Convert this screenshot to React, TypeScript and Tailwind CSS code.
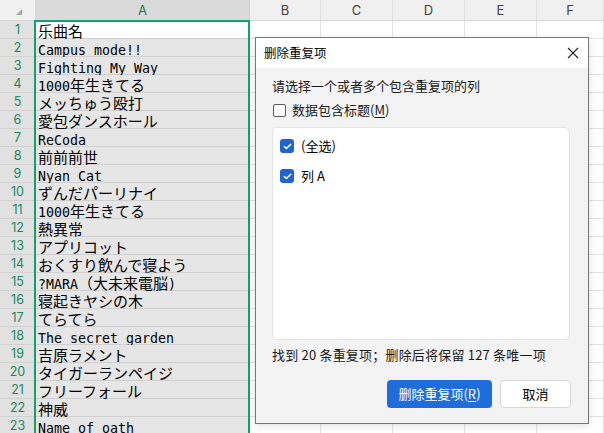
import React from "react";

const songs = [
  "乐曲名",
  "Campus mode!!",
  "Fighting My Way",
  "1000年生きてる",
  "メッちゅう殴打",
  "愛包ダンスホール",
  "ReCoda",
  "前前前世",
  "Nyan Cat",
  "ずんだパーリナイ",
  "1000年生きてる",
  "熱異常",
  "アプリコット",
  "おくすり飲んで寝よう",
  "?MARA（大未来電脳)",
  "寝起きヤシの木",
  "てらてら",
  "The secret garden",
  "吉原ラメント",
  "タイガーランペイジ",
  "フリーフォール",
  "神威",
  "Name of oath",
];

function Mixed({ text }: { text: string }) {
  const parts = text.split(/([\x00-\x7F]+)/).filter((p) => p.length > 0);
  return (
    <span className="block h-[16px] leading-[16px] whitespace-pre">
      {parts.map((p, i) =>
        /^[\x00-\x7F]+$/.test(p) ? (
          <span key={i} className="font-['DejaVu_Sans_Mono',monospace] text-[13.3px] leading-[16px] align-baseline">
            {p}
          </span>
        ) : (
          <span key={i} className="font-['Noto_Sans_CJK_JP',sans-serif] text-[15px] leading-[16px] align-baseline">
            {p}
          </span>
        )
      )}
    </span>
  );
}

const otherCols = [
  { l: "B", w: "w-[71px]" },
  { l: "C", w: "w-[72px]" },
  { l: "D", w: "w-[72px]" },
  { l: "E", w: "w-[72px]" },
  { l: "F", w: "flex-1" },
];

function CheckedBox() {
  return (
    <div className="w-[14px] h-[14px] rounded-[3px] bg-[#1f64d0] flex items-center justify-center shrink-0">
      <svg width="9" height="7" viewBox="0 0 9 7">
        <path d="M1.2 3.6 L3.4 5.6 L7.8 1.3" stroke="white" strokeWidth="1.4" fill="none" strokeLinecap="round" strokeLinejoin="round" />
      </svg>
    </div>
  );
}

export default function App() {
  return (
    <div className="relative w-[604px] h-[433px] overflow-hidden bg-white font-['Noto_Sans_CJK_SC',sans-serif]">
      {/* header */}
      <div className="flex h-[21px] bg-[#f0f0f0] border-b border-[#d6d6d6]">
        <div className="w-[36px] border-r border-[#d6d6d6] flex items-end justify-end pr-[13px] pb-[5px]">
          <svg width="6" height="6" viewBox="0 0 6 6">
            <path d="M6 0 L6 6 L0 6 Z" fill="#a8a8a8" />
          </svg>
        </div>
        <div className="w-[214px] bg-[#dadada] border-r border-[#d0d0d0] flex items-center justify-center text-[13px] leading-[18px] text-[#167c55] font-['Inter',sans-serif]">
          A
        </div>
        {otherCols.map((c) => (
          <div
            key={c.l}
            className={`${c.w} border-r border-[#e0e0e0] flex items-center justify-center text-[13px] leading-[18px] text-[#444] font-['Inter',sans-serif]`}
          >
            {c.l}
          </div>
        ))}
      </div>
      {/* rows */}
      <div className="flex flex-col">
        {songs.map((s, i) => (
          <div key={i} className="flex h-[18px] shrink-0">
            <div className="w-[36px] bg-[#e1e1e1] border-r border-b border-[#d2d2d2] flex items-center justify-center text-[12.5px] leading-[17px] text-[#1a8a5c] font-['Inter',sans-serif]">
              {i + 1}
            </div>
            <div
              className={`w-[214px] border-b border-r border-[#d0d0d0] flex items-center pl-[2px] text-black ${
                i === 0 ? "bg-white" : "bg-[#e6e6e6]"
              }`}
            >
              <Mixed text={s} />
            </div>
            {otherCols.map((c) => (
              <div key={c.l} className={`${c.w} border-r border-b border-[#e2e2e2]`} />
            ))}
          </div>
        ))}
      </div>

      {/* selection border */}
      <div className="absolute left-[34px] top-[20px] w-[216px] h-[430px] border-2 border-[#13a06f] pointer-events-none" />

      {/* dialog */}
      <div className="absolute left-[255px] top-[37px] w-[334px] h-[387px] border border-[#777] bg-[#f3f3f3] flex flex-col shadow-[0_2px_8px_rgba(0,0,0,0.12)]">
        <div className="h-[30px] bg-white flex items-center justify-between pl-[8px] pr-[9px] shrink-0">
          <span className="text-[12.5px] text-black leading-[18px]">删除重复项</span>
          <svg width="12" height="12" viewBox="0 0 12 12">
            <path d="M1 1 L11 11 M11 1 L1 11" stroke="#222" strokeWidth="1.1" />
          </svg>
        </div>
        <div className="flex flex-col px-[16px] pt-[9px]">
          <div className="text-[13px] leading-[18px] text-[#1a1a1a]">请选择一个或者多个包含重复项的列</div>
          <div className="flex items-center h-[18px] mt-[6px] gap-[6px]">
            <div className="w-[13px] h-[13px] ml-[1px] rounded-[2px] border border-[#5a5a5a] bg-white" />
            <span className="text-[13px] leading-[18px] text-[#1a1a1a]">
              数据包含标题(<span className="underline underline-offset-2">M</span>)
            </span>
          </div>
          <div className="mt-[8px] h-[213px] w-[298px] bg-white border border-[#e3e3e3] rounded-[5px] flex flex-col pt-[11px] pl-[7px] gap-[16px]">
            <div className="flex items-center gap-[7px] h-[14px]">
              <CheckedBox />
              <span className="text-[13px] leading-[18px] text-black">(全选)</span>
            </div>
            <div className="flex items-center gap-[7px] h-[14px]">
              <CheckedBox />
              <span className="text-[13px] leading-[18px] text-black">列 A</span>
            </div>
          </div>
          <div className="mt-[6px] text-[13px] leading-[18px] text-[#1a1a1a] whitespace-pre tracking-[0.2px]">
            找到 20 条重复项；删除后将保留 127 条唯一项
          </div>
          <div className="mt-[16px] flex justify-end gap-[8px] pr-[1px]">
            <div className="w-[105px] h-[28px] rounded-[4px] bg-[#1f6ddb] flex items-center justify-center text-[13px] text-white leading-[18px]">
              删除重复项(<span className="underline underline-offset-2">R</span>)
            </div>
            <div className="w-[71px] h-[28px] rounded-[4px] bg-white border border-[#d8d8d8] flex items-center justify-center text-[13px] text-black leading-[18px]">
              取消
            </div>
          </div>
        </div>
      </div>
    </div>
  );
}
